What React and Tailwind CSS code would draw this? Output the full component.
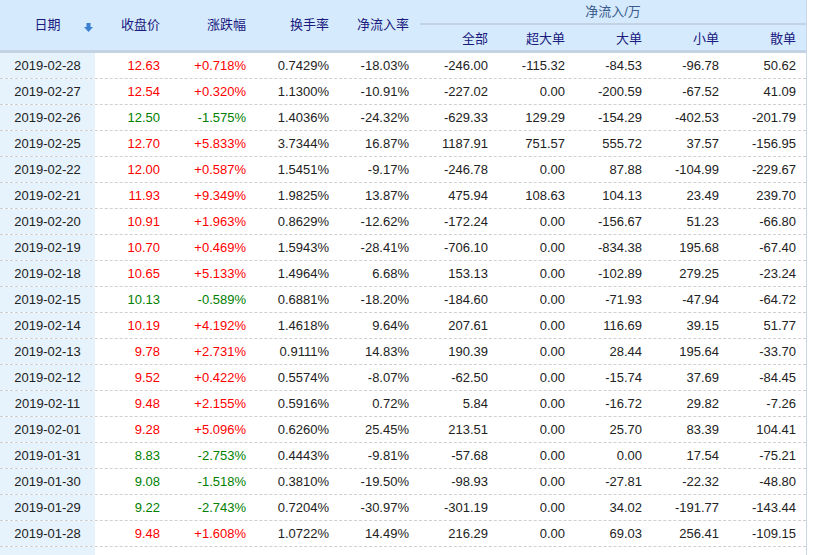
import React from "react";

const rows = [
  ["2019-02-28","12.63","+0.718%","0.7429%","-18.03%","-246.00","-115.32","-84.53","-96.78","50.62"],
  ["2019-02-27","12.54","+0.320%","1.1300%","-10.91%","-227.02","0.00","-200.59","-67.52","41.09"],
  ["2019-02-26","12.50","-1.575%","1.4036%","-24.32%","-629.33","129.29","-154.29","-402.53","-201.79"],
  ["2019-02-25","12.70","+5.833%","3.7344%","16.87%","1187.91","751.57","555.72","37.57","-156.95"],
  ["2019-02-22","12.00","+0.587%","1.5451%","-9.17%","-246.78","0.00","87.88","-104.99","-229.67"],
  ["2019-02-21","11.93","+9.349%","1.9825%","13.87%","475.94","108.63","104.13","23.49","239.70"],
  ["2019-02-20","10.91","+1.963%","0.8629%","-12.62%","-172.24","0.00","-156.67","51.23","-66.80"],
  ["2019-02-19","10.70","+0.469%","1.5943%","-28.41%","-706.10","0.00","-834.38","195.68","-67.40"],
  ["2019-02-18","10.65","+5.133%","1.4964%","6.68%","153.13","0.00","-102.89","279.25","-23.24"],
  ["2019-02-15","10.13","-0.589%","0.6881%","-18.20%","-184.60","0.00","-71.93","-47.94","-64.72"],
  ["2019-02-14","10.19","+4.192%","1.4618%","9.64%","207.61","0.00","116.69","39.15","51.77"],
  ["2019-02-13","9.78","+2.731%","0.9111%","14.83%","190.39","0.00","28.44","195.64","-33.70"],
  ["2019-02-12","9.52","+0.422%","0.5574%","-8.07%","-62.50","0.00","-15.74","37.69","-84.45"],
  ["2019-02-11","9.48","+2.155%","0.5916%","0.72%","5.84","0.00","-16.72","29.82","-7.26"],
  ["2019-02-01","9.28","+5.096%","0.6260%","25.45%","213.51","0.00","25.70","83.39","104.41"],
  ["2019-01-31","8.83","-2.753%","0.4443%","-9.81%","-57.68","0.00","0.00","17.54","-75.21"],
  ["2019-01-30","9.08","-1.518%","0.3810%","-19.50%","-98.93","0.00","-27.81","-22.32","-48.80"],
  ["2019-01-29","9.22","-2.743%","0.7204%","-30.97%","-301.19","0.00","34.02","-191.77","-143.44"],
  ["2019-01-28","9.48","+1.608%","1.0722%","14.49%","216.29","0.00","69.03","256.41","-109.15"],
];

const cols = "grid-cols-[95px_75px_86px_83px_80px_79px_77px_77px_77px_77px]";

export default function App() {
  return (
    <div className="w-[813px] h-[555px] bg-white overflow-hidden text-[13px] text-[#222]" style={{ fontFamily: "'Liberation Sans', 'Noto Sans CJK SC', sans-serif" }}>
      <div className="w-[807px] border-r border-[#c9d8e8]">
        <div className={`grid ${cols} h-[53px] bg-[#d5eafc] border-b-[3px] border-[#c3d3e3] text-[#1a1a80]`}>
          <div className="row-span-2 flex items-center justify-center relative">
            日期
            <svg className="absolute left-[84px] top-[23px]" width="9" height="9" viewBox="0 0 9 9">
              <rect x="2.5" y="0" width="4" height="4" fill="#3b7fd0" />
              <path d="M0 4 H9 L4.5 9 Z" fill="#3b7fd0" />
            </svg>
          </div>
          <div className="row-span-2 flex items-center justify-end pr-[10px]">收盘价</div>
          <div className="row-span-2 flex items-center justify-end pr-[10px]">涨跌幅</div>
          <div className="row-span-2 flex items-center justify-end pr-[10px]">换手率</div>
          <div className="row-span-2 flex items-center justify-end pr-[10px]">净流入率</div>
          <div className="col-span-5 h-[25px] flex items-center justify-center text-[#3a5c8c] border-b-2 border-[#c3d3e3] ml-[1px]">净流入/万</div>
          {["全部","超大单","大单","小单","散单"].map(t => (
            <div key={t} className="flex items-center justify-end pr-[10px] text-[#1a1a80]">{t}</div>
          ))}
        </div>
        {rows.map(r => {
          const c = r[2].startsWith("-") ? "text-[#008000]" : "text-[#ff0000]";
          return (
            <div key={r[0]} className={`grid ${cols} h-[26px] border-b border-dashed border-[#d0d0d0]`}>
              <div className="bg-[#e6f2fc] flex items-center justify-center">{r[0]}</div>
              {r.slice(1).map((v, i) => (
                <div key={i} className={`flex items-center justify-end pr-[10px] ${i < 2 ? c : ""}`}>{v}</div>
              ))}
            </div>
          );
        })}
        <div className="w-[95px] h-[20px] bg-[#e6f2fc]" />
      </div>
    </div>
  );
}
